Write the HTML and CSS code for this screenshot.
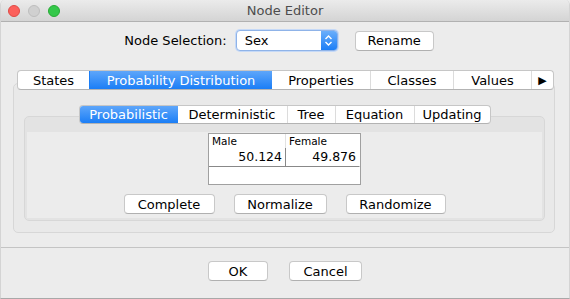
FILE: index.html
```html
<!DOCTYPE html>
<html lang="en">
<head>
    <meta charset="UTF-8">
    <title>Node Editor</title>
    <link rel="stylesheet" href="styles.css">
</head>
<body>
    <div class="window">
        <div class="titlebar">
            <div class="lights">
                <span class="light close"></span>
                <span class="light min"></span>
                <span class="light zoom"></span>
            </div>
            <div class="title">Node Editor</div>
            <div></div>
        </div>

        <div class="node-row">
            <span class="label">Node Selection:</span>
            <div class="combo">
                <span class="combo-text">Sex</span>
                <span class="combo-arrow">
                    <svg width="9" height="13" viewBox="0 0 9 13"><path d="M1.5 5 L4.5 2 L7.5 5 M1.5 8 L4.5 11 L7.5 8" fill="none" stroke="#fff" stroke-width="1.4"/></svg>
                </span>
            </div>
            <div class="button rename">Rename</div>
        </div>

        <div class="tabs main-tabs">
            <div class="tab w-states">States</div>
            <div class="tab selected w-prob">Probability Distribution</div>
            <div class="tab w-props">Properties</div>
            <div class="tab w-classes">Classes</div>
            <div class="tab w-values">Values</div>
            <div class="tab w-more">&#9654;</div>
        </div>
        <div class="panel outer">
            <div class="tabs sub-tabs">
                <div class="tab selected w-pr">Probabilistic</div>
                <div class="tab w-det">Deterministic</div>
                <div class="tab w-tree">Tree</div>
                <div class="tab w-eq">Equation</div>
                <div class="tab w-upd">Updating</div>
            </div>
            <div class="panel inner">
                <div class="content">
                    <div class="table">
                        <div class="th">Male</div>
                        <div class="th">Female</div>
                        <div class="td">50.124</div>
                        <div class="td">49.876</div>
                        <div class="empty"></div>
                    </div>
                    <div class="actions">
                        <div class="button w-complete">Complete</div>
                        <div class="button w-normalize">Normalize</div>
                        <div class="button w-randomize">Randomize</div>
                    </div>
                </div>
            </div>
        </div>

        <div class="footer">
            <div class="button w-ok">OK</div>
            <div class="button w-cancel">Cancel</div>
        </div>
    </div>
</body>
</html>
```

FILE: styles.css
```css
body {
    margin: 0;
    background: #ececec;
    font-family: "DejaVu Sans", sans-serif;
    font-size: 12px;
    color: #000;
}
.window {
    width: 570px;
    height: 299px;
    box-sizing: border-box;
    background: #ececec;
    border-left: 1px solid #d4d4d4;
    border-right: 1px solid #d4d4d4;
    border-bottom: 1px solid #a8a8a8;
    border-radius: 5px 5px 0 0;
    overflow: hidden;
}
.titlebar {
    height: 21px;
    display: grid;
    grid-template-columns: 1fr auto 1fr;
    align-items: center;
    background: linear-gradient(#ebebeb, #d4d4d4);
    border-bottom: 1px solid #b1b1b1;
}
.lights {
    display: flex;
    gap: 8px;
    padding-left: 7px;
}
.light {
    width: 12px;
    height: 12px;
    border-radius: 50%;
    box-sizing: border-box;
}
.light.close { background: #fc605b; border: 1px solid #de4a45; }
.light.min { background: #d0d0d0; border: 1px solid #bdbdbd; }
.light.zoom { background: #34c84a; border: 1px solid #27aa35; }
.title {
    font-size: 13px;
    color: #4d4d4d;
}

.node-row {
    display: flex;
    align-items: center;
    justify-content: center;
    margin-top: 8px;
    height: 21px;
    padding-right: 12px;
}
.label {
    font-size: 13px;
    margin-right: 9px;
}
.combo {
    width: 102px;
    height: 21px;
    box-sizing: border-box;
    display: flex;
    background: #fff;
    border: 1px solid #8fb3e8;
    border-radius: 4px;
    box-shadow: 0 0 0 1px #c5d9f7;
    overflow: hidden;
    margin-right: 17px;
}
.combo-text {
    flex: 1;
    padding-left: 8px;
    font-size: 13px;
    line-height: 19px;
}
.combo-arrow {
    width: 16px;
    display: flex;
    align-items: center;
    justify-content: center;
    background: linear-gradient(#6aaefb, #1c7ef6);
}
.button {
    height: 20px;
    box-sizing: border-box;
    display: flex;
    align-items: center;
    justify-content: center;
    background: #fff;
    border: 1px solid #c8c8c8;
    border-bottom-color: #b0b0b0;
    border-radius: 4px;
    font-size: 13px;
}
.rename { width: 79px; }

.tabs {
    display: flex;
    position: relative;
    z-index: 1;
    height: 20px;
    box-sizing: border-box;
    background: #fff;
    border: 1px solid #c6c6c6;
    border-bottom-color: #b3b3b3;
    border-radius: 4px;
    overflow: hidden;
}
.tab {
    display: flex;
    align-items: center;
    justify-content: center;
    border-left: 1px solid #dcdcdc;
    font-size: 13px;
    box-sizing: border-box;
}
.tab:first-child { border-left: none; }
.tab.selected {
    background: linear-gradient(#5ea6fa, #1b7ef6);
    color: #fff;
    border-left-color: #1b7ef6;
}
.tab.selected + .tab { border-left: none; }
.main-tabs {
    margin: 19px 0 0 16px;
    width: 537px;
}
.w-states { width: 71px; }
.w-prob { width: 183px; }
.w-props { width: 98px; }
.w-classes { width: 83px; }
.w-values { width: 78px; }
.w-more { flex: 1; font-size: 11px; }

.panel {
    box-sizing: border-box;
    border: 1px solid #d7d7d7;
    border-radius: 5px;
}
.panel.outer {
    margin: -7px 0 0 12px;
    width: 542px;
    height: 150px;
    background: #e9e9e9;
    padding: 21px 9px 0 10px;
}
.sub-tabs {
    height: 19px;
    width: 412px;
    margin: 0 auto;
}
.w-pr { width: 98px; }
.w-det { width: 109px; }
.w-tree { width: 48px; }
.w-eq { width: 79px; }
.w-upd { flex: 1; }
.panel.inner {
    margin-top: -8px;
    height: 105px;
    background: #e3e3e3;
    padding: 15px 2px 2px 2px;
}
.content {
    background: #ececec;
    height: 100%;
    display: flex;
    flex-direction: column;
    align-items: center;
    padding-top: 1px;
    box-sizing: border-box;
}
.table {
    width: 153px;
    height: 52px;
    box-sizing: border-box;
    background: #fff;
    border: 1px solid #a0a0a0;
    display: grid;
    grid-template-columns: 77px 1fr;
    grid-template-rows: 14px 19px 1fr;
}
.th {
    font-size: 10.5px;
    padding-left: 3px;
    line-height: 14px;
    border-right: 1px solid #e2e2e2;
}
.td {
    font-size: 12.5px;
    text-align: right;
    padding-right: 3px;
    line-height: 18px;
    border-right: 1px solid #888;
    border-bottom: 1px solid #888;
}
.td:nth-child(4), .th:nth-child(2) { border-right-color: transparent; }
.empty { grid-column: span 2; }
.actions {
    display: flex;
    gap: 19px;
    margin-top: 9px;
}
.w-complete { width: 91px; }
.w-normalize { width: 93px; }
.w-randomize { width: 100px; }

.footer {
    margin-top: 14px;
    border-top: 1px solid #c4c4c4;
    display: flex;
    justify-content: center;
    gap: 21px;
    padding: 13px 0 0 0;
}
.w-ok { width: 60px; }
.w-cancel { width: 73px; }
```
